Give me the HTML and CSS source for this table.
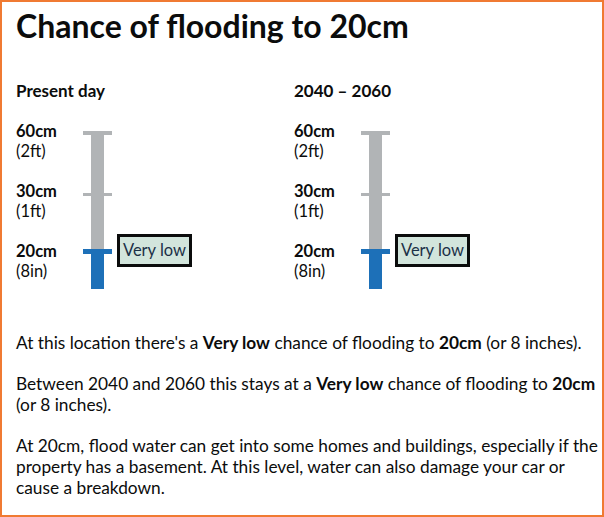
FILE: index.html
```html
<!DOCTYPE html>
<html lang="en">
<head>
<meta charset="utf-8">
<title>Chance of flooding to 20cm</title>
<link rel="stylesheet" href="styles.css">
</head>
<body>
<div class="frame">
  <h1 class="title">Chance of flooding to 20cm</h1>
  <div class="columns">
    <section class="col">
      <h2 class="col-title">Present day</h2>
      <div class="chart">
        <div class="levels">
          <div class="level level-60"><b>60cm</b><span>(2ft)</span></div>
          <div class="level level-30"><b>30cm</b><span>(1ft)</span></div>
          <div class="level level-20"><b>20cm</b><span>(8in)</span></div>
        </div>
        <svg class="gauge" width="29" height="158" viewBox="0 0 29 158" aria-hidden="true">
          <rect x="0" y="0" width="29" height="4" fill="#b1b4b6"/>
          <rect x="8" y="0" width="13" height="118" fill="#b1b4b6"/>
          <rect x="0" y="62" width="29" height="3" fill="#b1b4b6"/>
          <rect x="0" y="118" width="29" height="5" fill="#1d70b8"/>
          <rect x="8" y="118" width="13" height="40" fill="#1d70b8"/>
        </svg>
        <div class="tag">Very low</div>
      </div>
    </section>
    <section class="col">
      <h2 class="col-title">2040 – 2060</h2>
      <div class="chart">
        <div class="levels">
          <div class="level level-60"><b>60cm</b><span>(2ft)</span></div>
          <div class="level level-30"><b>30cm</b><span>(1ft)</span></div>
          <div class="level level-20"><b>20cm</b><span>(8in)</span></div>
        </div>
        <svg class="gauge" width="29" height="158" viewBox="0 0 29 158" aria-hidden="true">
          <rect x="0" y="0" width="29" height="4" fill="#b1b4b6"/>
          <rect x="8" y="0" width="13" height="118" fill="#b1b4b6"/>
          <rect x="0" y="62" width="29" height="3" fill="#b1b4b6"/>
          <rect x="0" y="118" width="29" height="5" fill="#1d70b8"/>
          <rect x="8" y="118" width="13" height="40" fill="#1d70b8"/>
        </svg>
        <div class="tag">Very low</div>
      </div>
    </section>
  </div>
  <p class="body first">At this location there's a <b>Very low</b> chance of flooding to <b>20cm</b> (or 8 inches).</p>
  <p class="body">Between 2040 and 2060 this stays at a <b>Very low</b> chance of flooding to <b>20cm</b> (or 8 inches).</p>
  <p class="body">At 20cm, flood water can get into some homes and buildings, especially if the property has a basement. At this level, water can also damage your car or cause a breakdown.</p>
</div>
</body>
</html>
```
FILE: styles.css
```css
html, body {
  margin: 0;
  padding: 0;
  background: #ffffff;
}

body {
  font-family: Lato, "Noto Sans", sans-serif;
  color: #0b0c0c;
}

.frame {
  box-sizing: border-box;
  width: 604px;
  height: 517px;
  border: 2px solid #f07a32;
  padding: 4px 0 0 14px;
  overflow: hidden;
}

.title {
  margin: 0;
  font-size: 32px;
  line-height: 40px;
  font-weight: 700;
}

.columns {
  display: grid;
  grid-template-columns: 278px 1fr;
  margin-top: 35px;
}

.col-title {
  margin: 0;
  font-size: 17px;
  line-height: 20px;
  font-weight: 700;
}

.chart {
  display: flex;
  align-items: flex-start;
  margin-top: 20px;
}

.levels {
  width: 67px;
  font-size: 16.5px;
  line-height: 20px;
}

.level b,
.level span {
  display: block;
}

.level b {
  font-weight: 700;
}

.level-30,
.level-20 {
  margin-top: 20px;
}

.gauge {
  display: block;
  margin-top: 10px;
  flex: none;
}

.tag {
  margin-top: 113px;
  margin-left: 5px;
  box-sizing: border-box;
  width: 75px;
  height: 33px;
  border: 3px solid #0b0c0c;
  background: #d2e5dc;
  color: #1b3047;
  font-size: 16.5px;
  line-height: 27px;
  text-align: center;
}

.body {
  margin: 20px 0 0 0;
  font-size: 17.3px;
  line-height: 21px;
}

.body.first {
  margin-top: 43px;
}

.body b {
  font-weight: 700;
}
```
